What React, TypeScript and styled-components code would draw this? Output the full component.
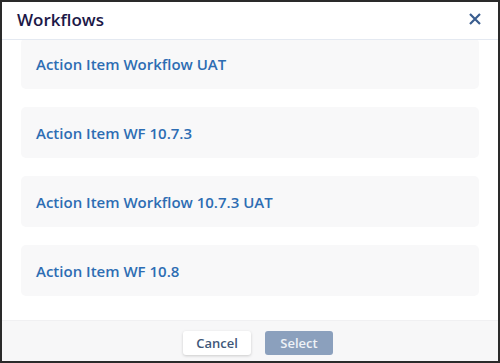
import React, { useEffect, useRef } from 'react';
import styled, { createGlobalStyle } from 'styled-components';

const GlobalStyle = createGlobalStyle`
  html, body {
    margin: 0;
    padding: 0;
    background: #ffffff;
    font-family: 'Open Sans', 'Liberation Sans', sans-serif;
  }
  * { box-sizing: border-box; }
`;

const Dialog = styled.div`
  width: 500px;
  height: 363px;
  border: 2px solid #2a2a2a;
  display: flex;
  flex-direction: column;
  background: #ffffff;
  overflow: hidden;
`;

const Header = styled.div`
  height: 38px;
  flex: 0 0 38px;
  display: flex;
  align-items: center;
  justify-content: space-between;
  padding: 0 17px 3px 15px;
  border-bottom: 1px solid #e4e9f1;
`;

const Title = styled.h2`
  margin: 0;
  font-size: 17px;
  font-weight: 600;
  color: #1c1847;
`;

const CloseButton = styled.button`
  border: none;
  background: none;
  padding: 0;
  width: 13px;
  height: 13px;
  display: flex;
  align-items: center;
  justify-content: center;
  cursor: pointer;
`;

const Body = styled.div`
  flex: 1;
  overflow: hidden;
  padding: 0 19px 24px;
`;

const List = styled.div`
  display: flex;
  flex-direction: column;
  gap: 18px;
`;

const Item = styled.div`
  height: 51px;
  display: flex;
  align-items: center;
  padding-left: 15px;
  background: #f8f8f9;
  border-radius: 5px;
  font-size: 15px;
  font-weight: 600;
  color: #2d6db3;
  cursor: pointer;
`;

const Footer = styled.div`
  flex: 0 0 41px;
  display: flex;
  justify-content: center;
  align-items: flex-start;
  gap: 14px;
  padding: 10px 0 0 16px;
  background: #f7f7f8;
  border-top: 1px solid #f0f0f2;
`;

const Button = styled.button<{ $primary?: boolean }>`
  width: 68px;
  height: 24px;
  border-radius: 3px;
  font-family: inherit;
  font-size: 13px;
  font-weight: 600;
  border: none;
  color: ${(p) => (p.$primary ? '#eef2f7' : '#3e5779')};
  background: ${(p) => (p.$primary ? '#8ba0bd' : '#ffffff')};
  box-shadow: ${(p) => (p.$primary ? 'none' : '0 1px 3px rgba(0, 0, 0, 0.18)')};
`;

const workflows = [
  'Action Item Workflow UAT',
  'Action Item WF 10.7.3',
  'Action Item Workflow 10.7.3 UAT',
  'Action Item WF 10.8',
];

export default function App() {
  const bodyRef = useRef<HTMLDivElement>(null);

  // list is scrolled to the bottom
  useEffect(() => {
    if (bodyRef.current) bodyRef.current.scrollTop = bodyRef.current.scrollHeight;
  }, []);

  return (
    <>
      <GlobalStyle />
      <Dialog>
        <Header>
          <Title>Workflows</Title>
          <CloseButton aria-label="Close">
            <svg width="12" height="12" viewBox="0 0 12 12">
              <path d="M1 1 L11 11 M11 1 L1 11" stroke="#3a5d8f" strokeWidth="2.2" strokeLinecap="butt" />
            </svg>
          </CloseButton>
        </Header>
        <Body ref={bodyRef}>
          <List>
            {workflows.map((name) => (
              <Item key={name}>{name}</Item>
            ))}
          </List>
        </Body>
        <Footer>
          <Button>Cancel</Button>
          <Button $primary disabled>Select</Button>
        </Footer>
      </Dialog>
    </>
  );
}
